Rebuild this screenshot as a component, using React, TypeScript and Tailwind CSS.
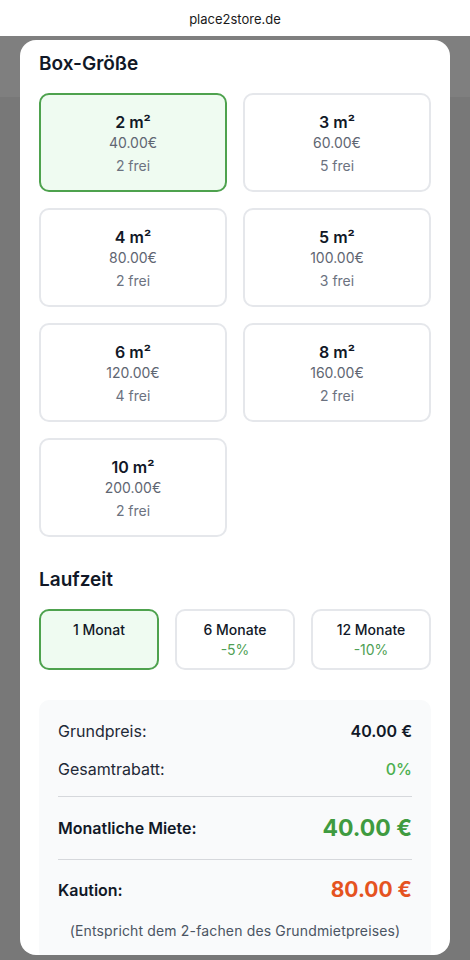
import React from "react";

const boxes = [
  { size: "2 m²", price: "40.00€", free: "2 frei", selected: true },
  { size: "3 m²", price: "60.00€", free: "5 frei" },
  { size: "4 m²", price: "80.00€", free: "2 frei" },
  { size: "5 m²", price: "100.00€", free: "3 frei" },
  { size: "6 m²", price: "120.00€", free: "4 frei" },
  { size: "8 m²", price: "160.00€", free: "2 frei" },
  { size: "10 m²", price: "200.00€", free: "2 frei" },
];

const terms = [
  { label: "1 Monat", discount: "", selected: true },
  { label: "6 Monate", discount: "-5%" },
  { label: "12 Monate", discount: "-10%" },
];

export default function App() {
  return (
    <div
      className="relative h-[960px] w-[470px] overflow-hidden bg-white"
      style={{ fontFamily: "Inter, 'Noto Sans', sans-serif" }}
    >
      <div className="flex h-[36px] items-center justify-center bg-white pt-[4px] text-[13px] text-[#1a1a1a]">
        place2store.de
      </div>
      <div className="flex h-[924px] flex-col">
        <div className="h-[61px] bg-[#7f7f7f]" />
        <div className="flex-1 bg-[#787878]" />
      </div>

      <div className="absolute left-[20px] top-[40px] h-[915px] w-[430px] overflow-hidden rounded-[16px] bg-white px-[19px] pt-[12px]">
        <h2 className="text-[19px] font-semibold leading-[24px] text-[#111827]">Box-Größe</h2>
        <div className="mt-[17px] grid grid-cols-2 gap-[16px]">
          {boxes.map((b) => (
            <div
              key={b.size}
              className={
                b.selected
                  ? "flex h-[99px] flex-col items-center justify-center rounded-[10px] border-2 border-[#4ea24e] bg-[#effbf1]"
                  : "flex h-[99px] flex-col items-center justify-center rounded-[10px] border-2 border-[#e5e7eb] bg-white"
              }
            >
              <div className="text-[16px] font-semibold leading-[24px] text-[#111827]">{b.size}</div>
              <div className="mt-[-1px] text-[14px] leading-[20px] text-[#5f6672]">{b.price}</div>
              <div className="mt-[3px] text-[14px] leading-[20px] text-[#6b7280]">{b.free}</div>
            </div>
          ))}
        </div>

        <h2 className="mt-[31px] text-[19px] font-semibold leading-[24px] text-[#111827]">Laufzeit</h2>
        <div className="mt-[17px] grid grid-cols-3 gap-[16px]">
          {terms.map((t) => (
            <div
              key={t.label}
              className={
                t.selected
                  ? "flex h-[61px] flex-col items-center rounded-[10px] border-2 border-[#4ea24e] bg-[#effbf1] pt-[9px]"
                  : "flex h-[61px] flex-col items-center rounded-[10px] border-2 border-[#e5e7eb] bg-white pt-[9px]"
              }
            >
              <div className="text-[14px] font-medium leading-[20px] text-[#111827]">{t.label}</div>
              {t.discount && (
                <div className="text-[14px] leading-[20px] text-[#4f9f55]">{t.discount}</div>
              )}
            </div>
          ))}
        </div>

        <div className="mt-[30px] rounded-[10px] bg-[#f9fafb] px-[19px] pb-[20px] pt-[19px]">
          <div className="flex items-center justify-between text-[16px] leading-[24px]">
            <span className="text-[#1f2937]">Grundpreis:</span>
            <span className="font-semibold text-[#111827]">40.00 €</span>
          </div>
          <div className="mt-[14px] flex items-center justify-between text-[16px] leading-[24px]">
            <span className="text-[#1f2937]">Gesamtrabatt:</span>
            <span className="font-medium text-[#4caf50]">0%</span>
          </div>
          <div className="mt-[15px] h-px bg-[#d6d8dc]" />
          <div className="mt-[15px] flex items-center justify-between">
            <span className="text-[16px] font-semibold leading-[24px] text-[#111827]">Monatliche Miete:</span>
            <span className="text-[23px] font-bold leading-[32px] text-[#3f9b40]">40.00 €</span>
          </div>
          <div className="mt-[15px] h-px bg-[#d6d8dc]" />
          <div className="mt-[15px] flex items-center justify-between">
            <span className="text-[16px] font-semibold leading-[24px] text-[#111827]">Kaution:</span>
            <span className="text-[21px] font-bold leading-[30px] text-[#e5531f]">80.00 €</span>
          </div>
          <div className="mt-[16px] text-center text-[14px] tracking-[0.15px] leading-[20px] text-[#4b5563]">
            (Entspricht dem 2-fachen des Grundmietpreises)
          </div>
        </div>
      </div>
    </div>
  );
}
